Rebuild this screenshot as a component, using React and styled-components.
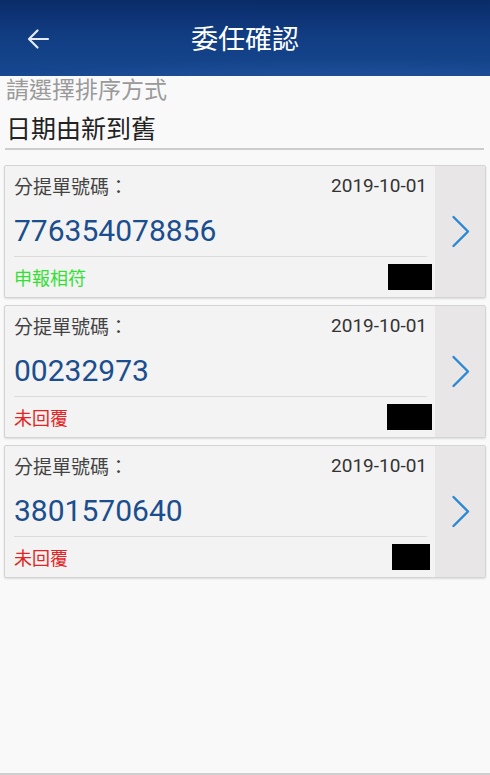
import React from "react";
import styled, { createGlobalStyle } from "styled-components";

const Global = createGlobalStyle`
  html, body { margin: 0; padding: 0; background: #f9f9f9; }
  body { font-family: Roboto, "Noto Sans CJK TC", sans-serif; }
  * { box-sizing: border-box; }
`;

const Page = styled.div`
  height: 775px;
  display: flex;
  flex-direction: column;
  background: #f9f9f9;
  border-bottom: 2px solid #cfcfcf;
`;

const Header = styled.header`
  height: 76px;
  flex-shrink: 0;
  position: relative;
  display: flex;
  align-items: center;
  justify-content: center;
  background:
    radial-gradient(ellipse 120% 60% at 70% 120%, rgba(60, 110, 190, 0.35), rgba(60, 110, 190, 0) 70%),
    linear-gradient(180deg, #0a2c68 0%, #113c82 45%, #16488f 100%);
  overflow: hidden;
`;

const BackButton = styled.button`
  position: absolute;
  left: 24px;
  top: 26px;
  width: 28px;
  height: 26px;
  padding: 0;
  border: none;
  background: none;
  display: flex;
  align-items: center;
  justify-content: center;
`;

const Title = styled.h1`
  margin: 0;
  font-weight: 400;
  font-size: 27px;
  line-height: 1;
  color: #ffffff;
  margin-top: 4px;
`;

const SortBox = styled.div`
  margin: 0 6px 0 5px;
  display: flex;
  flex-direction: column;
  border-bottom: 2px solid #cdcdcd;
`;

const SortLabel = styled.div`
  height: 30px;
  line-height: 30px;
  font-size: 23px;
  color: #9a9a9a;
  padding-left: 1px;
`;

const SortValue = styled.div`
  margin-top: 6px;
  height: 36px;
  line-height: 36px;
  font-size: 25px;
  color: #222222;
  padding-left: 1px;
`;

const List = styled.div`
  display: flex;
  flex-direction: column;
  gap: 7px;
  padding: 15px 4px 0 4px;
`;

const Card = styled.div`
  height: 133px;
  display: flex;
  background: #f3f3f3;
  border: 1px solid #d4d4d4;
  border-radius: 2px;
  box-shadow: 0 1px 2px rgba(0, 0, 0, 0.12);
  overflow: hidden;
`;

const Content = styled.div`
  flex: 1;
  display: flex;
  flex-direction: column;
  padding: 0 8px 0 9px;
`;

const TopRow = styled.div`
  height: 40px;
  display: flex;
  align-items: center;
  justify-content: space-between;
  padding-bottom: 1px;
`;

const Label = styled.span`
  font-size: 19px;
  color: #444444;
`;

const DateText = styled.span`
  font-size: 19px;
  color: #333333;
`;

const Number = styled.div`
  height: 51px;
  display: flex;
  align-items: center;
  font-size: 30px;
  color: #1b4e8e;
  border-bottom: 1px solid #dcdcdc;
  padding-bottom: 1px;
`;

const BottomRow = styled.div`
  flex: 1;
  display: flex;
  align-items: center;
  justify-content: space-between;
  margin-right: ${(p) => p.$shift}px;
`;

const Status = styled.span`
  font-size: 18px;
  color: ${(p) => (p.$ok ? "#33e033" : "#e42424")};
`;

const Redact = styled.div`
  width: ${(p) => p.$w}px;
  height: 26px;
  background: #000000;
`;

const Side = styled.div`
  width: 50px;
  flex-shrink: 0;
  background: #e8e6e6;
  display: flex;
  align-items: center;
  justify-content: center;
  padding-left: 2px;
`;

const Chevron = () => (
  <svg width="20" height="33" viewBox="0 0 20 33">
    <polyline
      points="2.5,2 17,16.5 2.5,31"
      fill="none"
      stroke="#2a88d6"
      strokeWidth="2.4"
      strokeLinecap="round"
      strokeLinejoin="round"
    />
  </svg>
);

const BackArrow = () => (
  <svg width="24" height="22" viewBox="0 0 24 22">
    <path
      d="M22 11 H3 M11.5 2.5 L3 11 L11.5 19.5"
      fill="none"
      stroke="#e6ebf3"
      strokeWidth="2.2"
      strokeLinecap="round"
      strokeLinejoin="round"
    />
  </svg>
);

const items = [
  { no: "776354078856", date: "2019-10-01", status: "申報相符", ok: true, w: 44, shift: -5 },
  { no: "00232973", date: "2019-10-01", status: "未回覆", ok: false, w: 45, shift: -5 },
  { no: "3801570640", date: "2019-10-01", status: "未回覆", ok: false, w: 38, shift: -3 },
];

export default function App() {
  return (
    <>
      <Global />
      <Page>
        <Header>
          <BackButton aria-label="back">
            <BackArrow />
          </BackButton>
          <Title>委任確認</Title>
        </Header>
        <SortBox>
          <SortLabel>請選擇排序方式</SortLabel>
          <SortValue>日期由新到舊</SortValue>
        </SortBox>
        <List>
          {items.map((it) => (
            <Card key={it.no}>
              <Content>
                <TopRow>
                  <Label>分提單號碼：</Label>
                  <DateText>{it.date}</DateText>
                </TopRow>
                <Number>{it.no}</Number>
                <BottomRow $shift={it.shift}>
                  <Status $ok={it.ok}>{it.status}</Status>
                  <Redact $w={it.w} />
                </BottomRow>
              </Content>
              <Side>
                <Chevron />
              </Side>
            </Card>
          ))}
        </List>
      </Page>
    </>
  );
}
